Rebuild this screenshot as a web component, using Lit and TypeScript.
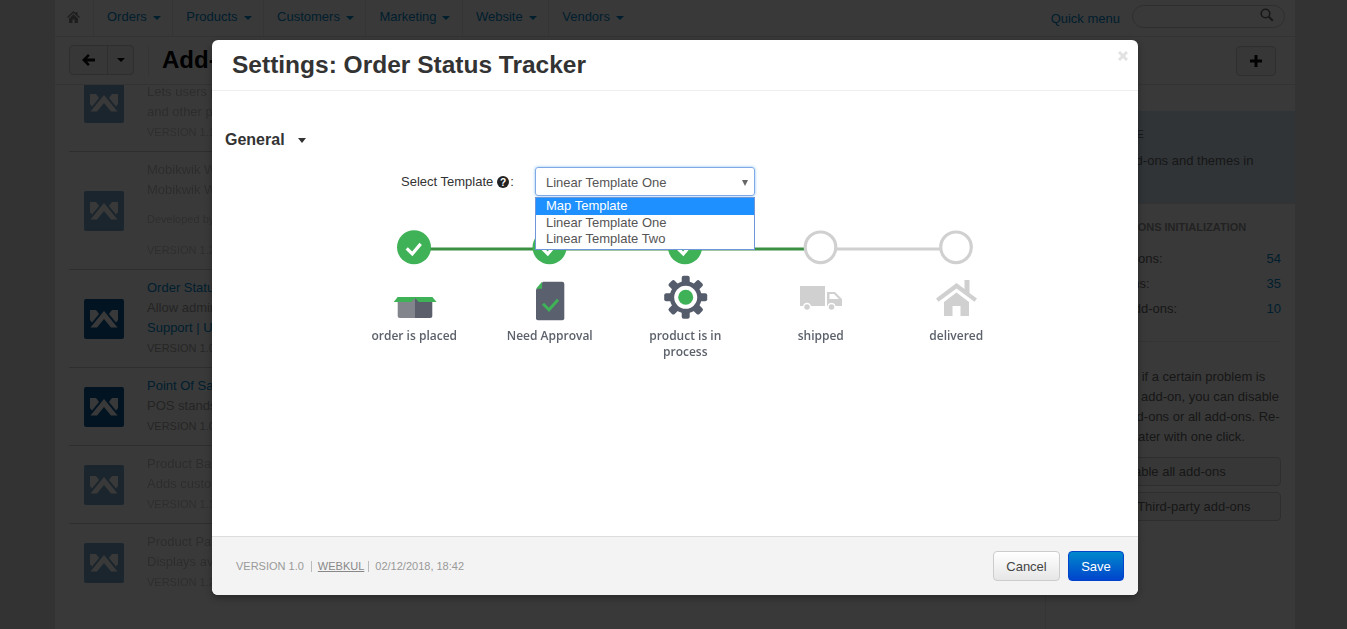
import { LitElement, html, css, svg } from "lit";
import { customElement } from "lit/decorators.js";

const logo = html`<svg class="tile" viewBox="0 0 40 40"><rect width="40" height="40" rx="2" fill="#0a5c9a"/><path d="M6 11h6l3 4-7 8.500-2-2.500zM34 11h-6l-3 4 7 8.500 2-2.500zM6.500 28.500L20 12l13.500 16.500H27L20 20l-7 8.500z" fill="#fff"/></svg>`;

interface Row { title: string; link?: boolean; desc: string; extra?: string; extraLink?: boolean; gap?: string; version: string; off?: boolean; cls: string; }
const rows: Row[] = [
  { title: "", desc: "Lets users pick a shipping date", extra: "and other preferences", version: "VERSION 1.1", off: false, cls: "first" },
  { title: "Mobikwik Wallet", desc: "Mobikwik Wallet payment method", gap: "Developed by Webkul", version: "VERSION 1.2", off: true, cls: "mob" },
  { title: "Order Status Tracker", link: true, desc: "Allow admin to set order status", extra: "Support | Upgrade", extraLink: true, version: "VERSION 1.0", cls: "" },
  { title: "Point Of Sale", link: true, desc: "POS stands for point of sale", version: "VERSION 1.0", cls: "" },
  { title: "Product Badges", desc: "Adds custom badges", version: "VERSION 1.1", off: true, cls: "" },
  { title: "Product Pack", desc: "Displays available packs", version: "VERSION 1.2", off: true, cls: "" },
];

@customElement("app-root")
export class AppRoot extends LitElement {
  static styles = css`
    :host { display: block; height: 629px; position: relative; overflow: hidden; background: #e3e3e3;
      font-family: "Liberation Sans", Arial, sans-serif; font-size: 13px; color: #333; }
    * { box-sizing: border-box; }
    .page { width: 1240px; height: 629px; margin-left: 55px; background: #fff; display: flex; flex-direction: column; }
    .nav { height: 37px; display: flex; align-items: center; border-bottom: 1px solid #e3e3e3; padding-left: 10px; flex: none; }
    .home { width: 29px; height: 36px; display: flex; align-items: center; border-right: 1px solid #eee; flex: none; padding-bottom: 3px; }
    .home svg { width: 13px; height: 12px; margin-left: 2px; }
    .nav-item { height: 36px; display: flex; align-items: center; gap: 6px; padding: 0 11.5px 3px 13px; border-right: 1px solid #eee; color: #08c; flex: none; }
    .nav-item.plain { border-right: 0; padding-right: 0; }
    .caret { width: 0; height: 0; border: 4px solid transparent; border-top: 4px solid #08c; border-bottom: 0; margin-top: 2px; }
    .quick { margin-left: auto; display: flex; align-items: center; margin-right: 10px; }
    .quick a { color: #08c; margin-right: 12px; }
    .search { width: 153px; height: 23px; border: 1px solid #ccc; border-radius: 12px; display: flex; justify-content: flex-end; align-items: center; padding-right: 10px; margin-top: -4px; }
    .search svg { width: 14px; height: 14px; margin-top: -2px; }
    .toolbar { height: 48px; display: flex; align-items: center; padding: 0 19px 0 14px; border-bottom: 1px solid #e3e3e3; flex: none; }
    .btn-group { display: flex; height: 30px; border: 1px solid #ccc; border-radius: 4px; margin-top: -1px; background: #f5f5f5; }
    .btn-group div { display: flex; align-items: center; justify-content: center; }
    .back { width: 38px; border-right: 1px solid #ccc; }
    .back svg { width: 13px; height: 12px; }
    .more { width: 25px; }
    .more i { width: 0; height: 0; border: 4px solid transparent; border-top-color: #000; border-bottom: 0; }
    .tb-title { margin-left: 14px; padding-left: 13px; border-left: 1px solid #eee; font-size: 24px; font-weight: bold; color: #000; height: 30px; line-height: 28px; white-space: nowrap; }
    .add { margin-left: auto; width: 40px; height: 30px; border: 1px solid #ccc; border-radius: 4px; background: #f5f5f5; display: flex; align-items: center; justify-content: center; }
    .add svg { width: 12px; height: 12px; }
    .main { flex: 1; display: flex; min-height: 0; }
    .list { width: 990px; flex: none; padding: 0 0 0 14px; overflow: hidden; }
    .row { display: flex; align-items: center; border-bottom: 1px solid #ccc; padding: 8px 0 8px 15px; }
    .row:last-child { border-bottom: 0; }
    .row.first { margin-top: -11px; height: 78px; padding-top: 0; padding-bottom: 0; }
    .row.first .tile { margin-bottom: 20px; }
    .tile { width: 40px; height: 40px; flex: none; margin-right: 23px; display: block; }
    .row.off .tile, .row.first .tile { opacity: .55; }
    .txt { line-height: 20px; color: #a0a0a0; }
    .row.off .txt, .row.first .txt { opacity: .6; }
    .txt .t { white-space: nowrap; }
    .link { color: #08c; }
    .ver { font-size: 11px; color: #aaa; line-height: 21px; }
    .gapline { margin: 9px 0 10px; }
    .side { flex: 1; border-left: 1px solid #eee; min-width: 0; font-size: 13px; }
    .notice { margin-top: 26px; height: 93px; background: #d5e9f6; border-bottom: 1px solid #e3e3e3; padding: 15px 13px 0; line-height: 20px; white-space: nowrap; color: #666; }
    .notice h4 { margin: 0 0 9px 3px; font-size: 11px; font-weight: normal; line-height: 16px; }
    .block { padding: 16px 14px 0 14px; white-space: nowrap; }
    .block h4 { margin: 0 0 18px -2px; font-size: 11px; font-weight: bold; color: #999; line-height: 14px; }
    .stat { display: flex; justify-content: space-between; height: 25px; line-height: 14px; color: #666; }
    .stat b { font-weight: normal; color: #08c; }
    .sep { border-top: 1px solid #e8e8e8; margin-top: 14px; height: 26px; }
    .para { line-height: 20px; color: #666; margin-bottom: 10px; }
    .sbtn { display: block; height: 29px; line-height: 27px; margin-bottom: 6px; border: 1px solid #ccc; border-radius: 4px; background: #f5f5f5; text-align: center; color: #666; }
    .backdrop { position: absolute; inset: 0; background: rgba(0,0,0,.775); }
    .modal { position: absolute; left: 212px; top: 40px; width: 926px; height: 555px; background: #fff; border-radius: 6px; display: flex; flex-direction: column; overflow: hidden; box-shadow: 0 3px 7px rgba(0,0,0,.3); }
    .m-head { height: 51px; border-bottom: 1px solid #eee; padding: 10px 20px 0; position: relative; flex: none; }
    .m-head h3 { margin: 0; font-size: 24.5px; line-height: 30px; font-weight: bold; color: #333; }
    .close { position: absolute; right: 10px; top: 11px; width: 10px; height: 10px; display: block; }
    .m-body { flex: 1; position: relative; min-height: 0; padding: 39px 13px 0; }
    .general { font-size: 16px; font-weight: bold; color: #333; line-height: 20px; display: flex; align-items: center; gap: 13px; }
    .general i { width: 0; height: 0; border: 4.5px solid transparent; border-top: 5px solid #333; border-bottom: 0; margin-top: 1px; }
    .field { display: flex; margin: 17px 0 0 176px; height: 29px; }
    .lbl { width: 134px; color: #333; display: flex; align-items: center; line-height: 20px; padding-top: 0; white-space: nowrap; gap: 4px; }
    .lbl svg { width: 12px; height: 12px; flex: none; }
    .lbl span { margin-left: -3px; }
    .select { position: relative; width: 220px; height: 29px; border: 1px solid #7ea9e6; border-radius: 3px; box-shadow: 0 0 3px rgba(82,168,236,.7); padding-left: 10px; line-height: 29px; color: #555; }
    .select i { position: absolute; right: 6px; top: 12px; width: 0; height: 0; border: 3.5px solid transparent; border-top: 6px solid #666; border-bottom: 0; }
    .dropdown { position: absolute; left: 323px; top: 106px; width: 220px; height: 53px; background: #fff; border: 1px solid #6f96d8; color: #555; z-index: 2; line-height: 16px; }
    .dropdown div { padding-left: 10px; height: 16px; }
    .dropdown .sel { background: #1e90ff; color: #fff; height: 17px; line-height: 15px; }
    .diagram { margin: 29px 0 0 121px; width: 678px; filter: blur(.3px); }
    .diagram svg { display: block; }
    .labels { display: grid; grid-template-columns: repeat(5, 135.5px); font-family: "Open Sans", sans-serif; font-size: 12px; line-height: 16px; font-weight: 600; color: #5c616b; text-align: center; margin-top: 3px; }
    .labels span { padding: 0 22px; margin-left: 1px; }
    .labels span:first-child { margin-left: 1px; padding: 0 20px; white-space: nowrap; }
    .m-foot { height: 59px; background: #f3f3f3; border-top: 1px solid #ddd; flex: none; display: flex; align-items: center; padding: 0 14px 0 24px; font-size: 11px; color: #999; }
    .m-foot .meta { display: flex; align-items: center; }
    .m-foot u { color: #888; margin: 0 4px 0 6px; }
    .m-foot s { width: 1px; height: 11px; background: #bbb; display: block; }
    .m-foot .v { margin-right: 7px; }
    .m-foot .d { margin-left: 6px; }
    .acts { margin-left: auto; display: flex; gap: 8px; font-size: 13px; }
    .cancel, .save { height: 30px; border-radius: 4px; display: flex; align-items: center; justify-content: center; }
    .cancel { width: 67px; border: 1px solid #ccc; background: linear-gradient(#fff, #e6e6e6); color: #444; }
    .save { width: 56px; border: 1px solid #04c; background: linear-gradient(#08c, #04c); color: #fff; }
  `;

  private track() {
    const done = [68, 203.5, 339];
    const todo = [474.5, 610];
    return html`<svg width="678" height="100" viewBox="0 0 678 100">
      <rect x="68" y="22.5" width="390" height="3" fill="#3a8f42"/>
      <rect x="458" y="22.5" width="152" height="3" fill="#d0d0d0"/>
      ${done.map(x => svg`<circle cx="${x}" cy="22.3" r="17" fill="#3fb257"/>
        <path d="M${x - 7.3} 23.3l5.6 5.6 8.4-10" fill="none" stroke="#fff" stroke-width="3.2"/>`)}
      ${todo.map(x => svg`<circle cx="${x}" cy="22.3" r="15.3" fill="#fff" stroke="#d0d0d0" stroke-width="3.2"/>`)}
      <g transform="translate(51.7 72)">
        <path d="M0 0h17.3v21H2a2 2 0 0 1-2-2z" fill="#82858b"/>
        <path d="M17.3 0h17.3v19a2 2 0 0 1-2 2H17.3z" fill="#5a5f6b"/>
        <path d="M-4 5l4-5h34.6l4.3 5H21l-3.7-4-3.8 4z" fill="#3fb257"/>
      </g>
      <g transform="translate(190 56.7)">
        <path d="M7 0h19a2.300 2.300 0 0 1 2.300 2.300v34.300a2 2 0 0 1-2 2H2a2 2 0 0 1-2-2V8z" fill="#5a606d"/>
        <path d="M6 0v7H0z" fill="#3fb257"/>
        <path d="M7 22l6 6 9-10" fill="none" stroke="#3fb257" stroke-width="3"/>
      </g>
      <g transform="translate(339.700 72.300)">
        <g fill="#555c6b">${[0, 45, 90, 135, 180, 225, 270, 315].map(a => svg`<rect x="-4" y="-21.500" width="8" height="10" rx="2" transform="rotate(${a})"/>`)}</g>
        <circle r="16" fill="#555c6b"/>
        <circle r="11.500" fill="#fff"/>
        <circle r="7.500" fill="#3fb257"/>
      </g>
      <g transform="translate(454 61)" fill="#d0d0d0">
        <path d="M0 0h25v20H0z"/>
        <path d="M27 6h8l7 7v7H27zM29.500 8v5h9.500l-5-5z" fill-rule="evenodd"/>
        <circle cx="7" cy="21" r="3.500" fill="#d0d0d0" stroke="#fff" stroke-width="1.500"/>
        <circle cx="31.500" cy="21" r="3.500" fill="#d0d0d0" stroke="#fff" stroke-width="1.500"/>
      </g>
      <g transform="translate(590 54)" fill="#d0d0d0">
        <path d="M0 19.500L20.500 4l8 6V1h5v13l7.500 5.500-2.500 3.200L20.500 9.500 2.500 22.700z"/>
        <path d="M8 23L20.500 13.500 33 23v14H24.500V27h-8v10H8z"/>
      </g>
    </svg>`;
  }

  render() {
    return html`
      <div class="page">
        <div class="nav">
          <div class="home"><svg viewBox="0 0 13 12"><path d="M6.500 0L0 6l1 1 5.500-5 5.500 5 1-1-2.500-2.300V1H9v1.300zM2 7.500V12h3.500V8.500h2V12H11V7.500L6.500 3.300z" fill="#888"/></svg></div>
          ${["Orders", "Products", "Customers", "Marketing", "Website"].map(n => html`<div class="nav-item">${n}<span class="caret"></span></div>`)}
          <div class="nav-item plain">Vendors<span class="caret"></span></div>
          <div class="quick"><a>Quick menu</a><div class="search"><svg viewBox="0 0 14 14"><circle cx="5.500" cy="5.500" r="4.300" fill="none" stroke="#666" stroke-width="1.600"/><path d="M8.800 8.800l4 4" stroke="#666" stroke-width="2"/></svg></div></div>
        </div>
        <div class="toolbar">
          <div class="btn-group">
            <div class="back"><svg viewBox="0 0 13 12"><path d="M6 0l1.800 1.800-2.700 2.700H13v3H5.100l2.700 2.700L6 12 0 6z" fill="#111"/></svg></div>
            <div class="more"><i></i></div>
          </div>
          <div class="tb-title">Add-ons</div>
          <div class="add"><svg viewBox="0 0 12 12"><path d="M4.500 0h3v4.500H12v3H7.500V12h-3V7.500H0v-3h4.500z" fill="#111"/></svg></div>
        </div>
        <div class="main">
          <div class="list">
            ${rows.map(r => html`<div class="row ${r.cls} ${r.off ? "off" : ""}">
              ${logo}
              <div class="txt">
                ${r.title ? html`<div class="t ${r.link ? "link" : ""}">${r.title}</div>` : ""}
                <div class="t">${r.desc}</div>
                ${r.extra ? html`<div class="t ${r.extraLink ? "link" : ""}">${r.extra}</div>` : ""}
                ${r.gap ? html`<div class="t ver gapline">${r.gap}</div>` : ""}
                <div class="ver">${r.version}</div>
              </div>
            </div>`)}
          </div>
          <div class="side">
            <div class="notice"><h4>MARKETPLACE</h4>Find more add-ons and themes in<br>Marketplace.</div>
            <div class="block">
              <h4>CS-CART ADD-ONS INITIALIZATION</h4>
              <div class="stat"><span>Installed add-ons:</span><b>54</b></div>
              <div class="stat"><span>Active add-ons:</span><b>35</b></div>
              <div class="stat"><span>Third-party add-ons:</span><b>10</b></div>
              <div class="sep"></div>
              <div class="para">If you wonder if a certain problem is<br>caused by an add-on, you can disable<br>third-party add-ons or all add-ons. Re-<br>enable them later with one click.</div>
              <div class="sbtn">Disable all add-ons</div>
              <div class="sbtn">Disable Third-party add-ons</div>
            </div>
          </div>
        </div>
      </div>
      <div class="backdrop"></div>
      <div class="modal">
        <div class="m-head">
          <h3>Settings: Order Status Tracker</h3>
          <svg class="close" viewBox="0 0 10 10"><path d="M1 1l8 8M9 1l-8 8" stroke="#e2e2e2" stroke-width="3"/></svg>
        </div>
        <div class="m-body">
          <div class="general">General <i></i></div>
          <div class="field">
            <div class="lbl">Select Template <svg viewBox="0 0 13 13"><circle cx="6.500" cy="6.500" r="6.500" fill="#222"/><text x="6.500" y="10.500" font-size="11" font-weight="bold" text-anchor="middle" fill="#fff" font-family="Liberation Sans">?</text></svg><span>:</span></div>
            <div class="select">Linear Template One<i></i></div>
          </div>
          <div class="dropdown">
            <div class="sel">Map Template</div>
            <div>Linear Template One</div>
            <div>Linear Template Two</div>
          </div>
          <div class="diagram">
            ${this.track()}
            <div class="labels">
              <span>order is placed</span><span>Need Approval</span><span>product is in process</span><span>shipped</span><span>delivered</span>
            </div>
          </div>
        </div>
        <div class="m-foot">
          <div class="meta"><span class="v">VERSION 1.0</span><s></s><u>WEBKUL</u><s></s><span class="d">02/12/2018, 18:42</span></div>
          <div class="acts"><div class="cancel">Cancel</div><div class="save">Save</div></div>
        </div>
      </div>`;
  }
}
